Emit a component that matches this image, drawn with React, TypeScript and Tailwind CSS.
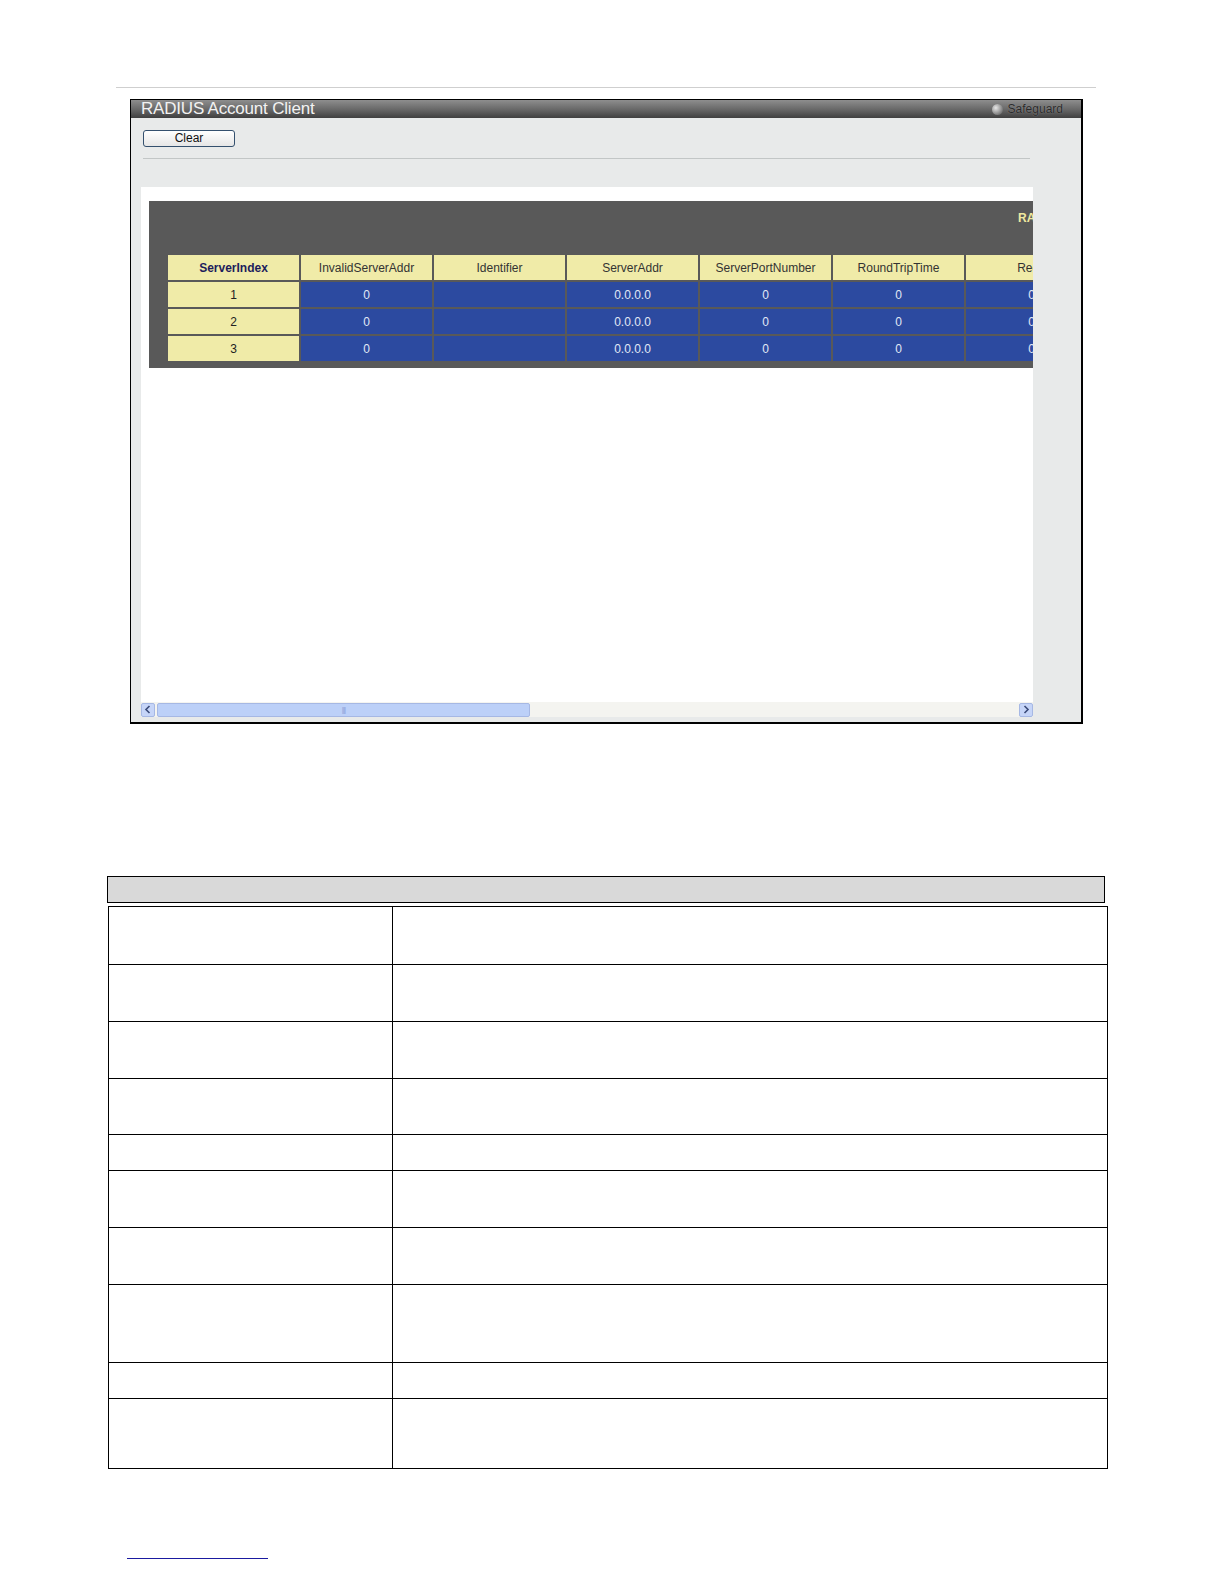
const columns = [
  "ServerIndex",
  "InvalidServerAddr",
  "Identifier",
  "ServerAddr",
  "ServerPortNumber",
  "RoundTripTime",
  "Requ",
];

const rows = [
  ["1", "0", "", "0.0.0.0", "0", "0", "0"],
  ["2", "0", "", "0.0.0.0", "0", "0", "0"],
  ["3", "0", "", "0.0.0.0", "0", "0", "0"],
];

const descHeights = [57, 57, 57, 56, 36, 57, 57, 78, 36, 70];

function Chevron({ dir }: { dir: "left" | "right" }) {
  return (
    <svg width="8" height="9" viewBox="0 0 8 9">
      <path
        d={dir === "left" ? "M5.5 1 L2 4.5 L5.5 8" : "M2.5 1 L6 4.5 L2.5 8"}
        fill="none"
        stroke="#3a4a78"
        strokeWidth="1.6"
      />
    </svg>
  );
}

export default function App() {
  return (
    <div className="flow-root bg-white font-['Liberation_Sans',Arial,sans-serif]">
      {/* top rule */}
      <div className="ml-[116px] mt-[87px] h-px w-[980px] bg-[#cfcfcf]" />

      {/* window */}
      <div className="ml-[130px] mt-[11px] flex h-[625px] w-[953px] flex-col border border-r-2 border-b-2 border-black bg-[#e8eaea]">
        <div className="flex h-[18px] shrink-0 items-center justify-between bg-gradient-to-b from-[#8e8e8e] via-[#6a6a6a] to-[#404040] pl-[10px] pr-[18px]">
          <span className="text-[17px] leading-[18px] tracking-[-0.2px] text-[#f2f2f2]">
            RADIUS Account Client
          </span>
          <div className="flex items-center gap-[5px]">
            <span className="h-[11px] w-[11px] rounded-full bg-[radial-gradient(circle_at_35%_35%,#e8e8e8,#8a8a8a_60%,#4a4a4a)]" />
            <span className="text-[12px] leading-[18px] text-[#2a2a2a] [text-shadow:0_0_1px_#9a9a9a]">
              Safeguard
            </span>
          </div>
        </div>

        <div className="flex flex-1 flex-col">
          <div className="ml-[12px] mt-[12px] flex h-[17px]">
            <button className="h-[17px] w-[92px] rounded-[3px] border border-[#34506e] bg-gradient-to-b from-white to-[#e6e6e6] text-[12px] leading-[15px] text-[#111]">
              Clear
            </button>
          </div>
          <div className="ml-[12px] mt-[11px] h-px w-[887px] bg-[#c2c6c6]" />

          <div className="ml-[10px] mt-[28px] flex h-[530px] w-[892px] flex-col bg-white">
            <div className="flex-1 overflow-hidden pl-[8px] pt-[14px]">
              <div className="h-[167px] w-[900px] overflow-hidden bg-[#595959] pl-[19px]">
                <div className="flex h-[54px] items-start pt-[8px]">
                  <span className="ml-[850px] shrink-0 whitespace-nowrap text-[12px] font-bold text-[#efe9a0]">
                    RA
                  </span>
                </div>
                <div className="flex flex-col gap-[2px]">
                  <div className="flex gap-[2px]">
                    {columns.map((c, i) => (
                      <div
                        key={c}
                        className={`flex h-[25px] w-[131px] shrink-0 items-center justify-center bg-[#f0eba8] text-[12px] ${
                          i === 0 ? "font-bold text-[#1d1d5c]" : "text-[#333]"
                        }`}
                      >
                        {c}
                      </div>
                    ))}
                  </div>
                  {rows.map((r, ri) => (
                    <div key={ri} className="flex gap-[2px]">
                      {r.map((v, i) => (
                        <div
                          key={i}
                          className={`flex h-[25px] w-[131px] shrink-0 items-center justify-center text-[12px] ${
                            i === 0
                              ? "bg-[#f0eba8] text-[#222]"
                              : "bg-[#2c4aa0] text-[#e2e8f6]"
                          }`}
                        >
                          {v}
                        </div>
                      ))}
                    </div>
                  ))}
                </div>
              </div>
            </div>

            {/* horizontal scrollbar */}
            <div className="flex h-[15px] shrink-0 items-center bg-[#f4f4f0]">
              <div className="flex h-[14px] w-[14px] items-center justify-center rounded-[2px] border border-[#a6b8e4] bg-[#c6d5f8]">
                <Chevron dir="left" />
              </div>
              <div className="ml-[2px] flex h-[14px] w-[373px] items-center justify-center rounded-[2px] border border-[#a6b8e4] bg-[#bcd0f8]">
                <span className="text-[7px] leading-none tracking-[-1px] text-[#8ea4d8]">
                  ||||
                </span>
              </div>
              <div className="flex-1" />
              <div className="flex h-[14px] w-[14px] items-center justify-center rounded-[2px] border border-[#a6b8e4] bg-[#c6d5f8]">
                <Chevron dir="right" />
              </div>
            </div>
          </div>
        </div>
      </div>

      {/* description table */}
      <div className="ml-[107px] mt-[152px] h-[27px] w-[998px] border border-black bg-[#d9d9d9]" />
      <div className="ml-[108px] mt-[3px] w-[1000px] border border-black">
        {descHeights.map((h, i) => (
          <div
            key={i}
            className={`grid grid-cols-[284px_1fr] ${i > 0 ? "border-t border-black" : ""}`}
            style={{ height: h }}
          >
            <div className="border-r border-black" />
            <div />
          </div>
        ))}
      </div>

      {/* footer link */}
      <div className="mb-[8px] ml-[127px] mt-[89px] h-px w-[141px] bg-[#1a1aa0]" />
    </div>
  );
}
